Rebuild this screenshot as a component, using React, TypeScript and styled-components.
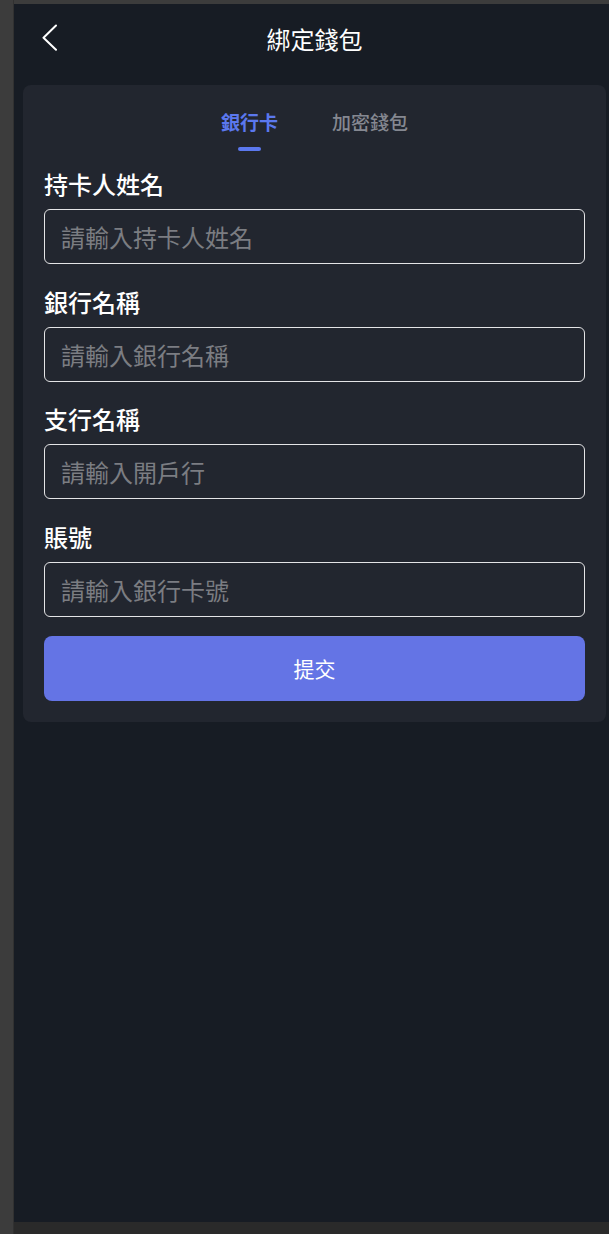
import React, { useState } from 'react'
import styled, { createGlobalStyle } from 'styled-components'

const FONT = `"Noto Sans CJK TC", "Noto Sans", sans-serif`
const ACCENT = '#5b78ee'
const SCREEN_BG = '#171c24'
const CARD_BG = '#22262f'

const GlobalStyle = createGlobalStyle`
  html, body {
    margin: 0;
    padding: 0;
    background: #2a2a2a;
  }
  * {
    box-sizing: border-box;
  }
`

const Desk = styled.div`
  display: flex;
  height: 1234px;
  overflow: hidden;
  font-family: ${FONT};
`

const SideRail = styled.div`
  width: 14px;
  flex-shrink: 0;
  background: #3c3c3c;
  border-right: 1px solid #313131;
`

const Viewport = styled.div`
  flex: 1;
  min-width: 0;
  display: flex;
  flex-direction: column;
  background: #2a2a2a;
`

const TopStrip = styled.div`
  height: 4px;
  flex-shrink: 0;
  background: #3c3c3c;
`

const Screen = styled.div`
  width: 601px;
  height: 1218px;
  flex-shrink: 0;
  background: ${SCREEN_BG};
`

const Header = styled.header`
  height: 70px;
  display: grid;
  grid-template-columns: 1fr auto 1fr;
  align-items: center;
`

const BackButton = styled.button`
  justify-self: start;
  margin: -4px 0 0 28px;
  padding: 0;
  border: 0;
  background: none;
  display: flex;
  cursor: pointer;
`

const Title = styled.h1`
  margin: 0;
  font-size: 24px;
  line-height: 32px;
  font-weight: 400;
  color: #ffffff;
`

const Card = styled.section`
  margin: 11px 9px 0;
  padding: 21px;
  background: ${CARD_BG};
  border-radius: 8px;
`

const TabBar = styled.div`
  display: flex;
  justify-content: center;
  gap: 54px;
  margin-bottom: 17px;
`

const Tab = styled.button<{ $active: boolean }>`
  display: flex;
  flex-direction: column;
  align-items: center;
  padding: 0;
  border: 0;
  background: none;
  cursor: pointer;
  font-family: ${FONT};
  font-size: 19px;
  line-height: 32px;
  font-weight: ${p => (p.$active ? 700 : 500)};
  color: ${p => (p.$active ? ACCENT : '#858891')};

  &::after {
    content: '';
    width: 23px;
    height: 4px;
    margin-top: 9px;
    border-radius: 2px;
    background: ${p => (p.$active ? ACCENT : 'transparent')};
  }
`

const Field = styled.label`
  display: flex;
  flex-direction: column;
  margin-bottom: 21.5px;

  &:last-of-type {
    margin-bottom: 19.5px;
  }
`

const FieldLabel = styled.span`
  font-size: 24px;
  line-height: 32px;
  font-weight: 500;
  color: #ffffff;
  margin-bottom: 9px;
`

const Input = styled.input`
  height: 55px;
  width: 100%;
  padding: 0 16px;
  border: 1px solid #e4e4e6;
  border-radius: 6px;
  background: transparent;
  font-family: ${FONT};
  font-size: 24px;
  color: #ffffff;
  outline: none;

  &::placeholder {
    color: #7b7d82;
  }
`

const SubmitButton = styled.button`
  display: block;
  width: 100%;
  height: 64.5px;
  border: 0;
  border-radius: 8px;
  background: #6474e5;
  color: #ffffff;
  font-family: ${FONT};
  font-size: 21px;
  cursor: pointer;
`

const BackIcon = () => (
  <svg width="16" height="27" viewBox="0 0 16 27" fill="none">
    <polyline points="14,1.5 1.5,13.8 14,25.8" stroke="#ffffff" strokeWidth="2" strokeLinecap="round" strokeLinejoin="round" />
  </svg>
)

const fields = [
  { label: '持卡人姓名', placeholder: '請輸入持卡人姓名' },
  { label: '銀行名稱', placeholder: '請輸入銀行名稱' },
  { label: '支行名稱', placeholder: '請輸入開戶行' },
  { label: '賬號', placeholder: '請輸入銀行卡號' },
]

const tabs = ['銀行卡', '加密錢包']

export default function App() {
  const [tab, setTab] = useState(0)

  return (
    <>
      <GlobalStyle />
      <Desk>
        <SideRail />
        <Viewport>
          <TopStrip />
          <Screen>
            <Header>
              <BackButton aria-label="返回">
                <BackIcon />
              </BackButton>
              <Title>綁定錢包</Title>
            </Header>
            <Card>
              <TabBar>
                {tabs.map((t, i) => (
                  <Tab key={t} $active={tab === i} onClick={() => setTab(i)}>
                    {t}
                  </Tab>
                ))}
              </TabBar>
              <form onSubmit={e => e.preventDefault()}>
                {fields.map(f => (
                  <Field key={f.label}>
                    <FieldLabel>{f.label}</FieldLabel>
                    <Input placeholder={f.placeholder} />
                  </Field>
                ))}
                <SubmitButton type="submit">提交</SubmitButton>
              </form>
            </Card>
          </Screen>
        </Viewport>
      </Desk>
    </>
  )
}
